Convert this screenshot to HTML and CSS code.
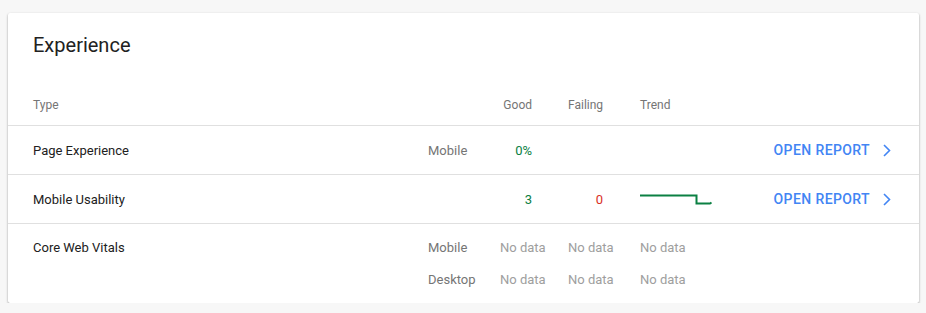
FILE: index.html
```html
<!DOCTYPE html>
<html lang="en">
<head>
  <meta charset="UTF-8" />
  <title>Experience</title>
  <meta name="viewport" content="width=device-width, initial-scale=1.0" />
  <link rel="stylesheet" href="styles.css">
</head>
<body>
  <div class="card">
    <h2>Experience</h2>

    <div class="row head">
      <div class="c-type">Type</div>
      <div class="c-dev"></div>
      <div class="c-good num">Good</div>
      <div class="c-fail num">Failing</div>
      <div class="c-trend">Trend</div>
    </div>

    <div class="row">
      <div class="c-type">Page Experience</div>
      <div class="c-dev">Mobile</div>
      <div class="c-good num green">0%</div>
      <div class="c-fail num"></div>
      <div class="c-trend"></div>
      <a class="open" href="#">OPEN REPORT
        <svg width="8" height="13" viewBox="0 0 8 13"><polyline points="1,1 6.5,6.5 1,12" fill="none" stroke="#4285f4" stroke-width="1.6"/></svg>
      </a>
    </div>

    <div class="row">
      <div class="c-type">Mobile Usability</div>
      <div class="c-dev"></div>
      <div class="c-good num green">3</div>
      <div class="c-fail num red">0</div>
      <div class="c-trend">
        <svg class="spark" width="74" height="12" viewBox="0 0 74 12">
          <polyline points="0,1.5 56.5,1.5 56.5,9.5 70,9.5 71.5,8.5" fill="none" stroke="#0b8043" stroke-width="2"/>
        </svg>
      </div>
      <a class="open" href="#">OPEN REPORT
        <svg width="8" height="13" viewBox="0 0 8 13"><polyline points="1,1 6.5,6.5 1,12" fill="none" stroke="#4285f4" stroke-width="1.6"/></svg>
      </a>
    </div>

    <div class="multi">
      <div class="c-type">Core Web Vitals</div>
      <div class="subs">
        <div class="sub">
          <div class="c-dev">Mobile</div>
          <div class="c-good nodata">No data</div>
          <div class="c-fail nodata">No data</div>
          <div class="c-trend nodata">No data</div>
        </div>
        <div class="sub">
          <div class="c-dev">Desktop</div>
          <div class="c-good nodata">No data</div>
          <div class="c-fail nodata">No data</div>
          <div class="c-trend nodata">No data</div>
        </div>
      </div>
    </div>
  </div>
</body>
</html>
```

FILE: styles.css
```css
body {
  margin: 0;
  background-color: #f7f7f7;
  font-family: Roboto, "Liberation Sans", sans-serif;
  font-size: 13px;
  color: #212121;
}

.card {
  margin: 13px 7px 0 8px;
  height: 290px;
  box-sizing: border-box;
  background: #fff;
  border-radius: 2px;
  box-shadow: 0 1px 2px rgba(0, 0, 0, 0.3), 0 1px 3px rgba(0, 0, 0, 0.12);
  padding-top: 16px;
}

h2 {
  margin: 0 0 22px 25px;
  font-size: 20px;
  font-weight: 400;
  line-height: 32px;
  color: #212121;
}

.row {
  display: flex;
  align-items: center;
  height: 48px;
  padding-left: 25px;
  border-bottom: 1px solid #e0e0e0;
}

.row.head {
  box-sizing: border-box;
  height: 43px;
  padding-top: 2px;
  color: #757575;
  font-size: 12px;
}

.c-type { width: 395px; flex: none; }
.c-dev { width: 60px; flex: none; color: #757575; }
.c-good { width: 68px; flex: none; box-sizing: border-box; padding-left: 12px; }
.c-fail { width: 72px; flex: none; box-sizing: border-box; padding-left: 12px; }
.c-trend { width: 120px; flex: none; padding-left: 12px; }

.c-good.num { text-align: right; padding-right: 24px; }
.c-fail.num { text-align: right; padding-right: 25px; }

.green { color: #0b8043; }
.red { color: #d93025; }
.nodata { color: #9e9e9e; }

.spark { display: block; margin-top: 2px; }

.open {
  margin-left: auto;
  margin-right: 28px;
  display: flex;
  align-items: center;
  gap: 13px;
  color: #4285f4;
  text-decoration: none;
  font-size: 14px;
  font-weight: 500;
  letter-spacing: 0.4px;
}

.multi {
  display: flex;
  padding: 7px 0 0 25px;
}

.multi .c-type { line-height: 32px; padding-top: 1px; }

.sub {
  display: flex;
  align-items: center;
  height: 32px;
}
```
